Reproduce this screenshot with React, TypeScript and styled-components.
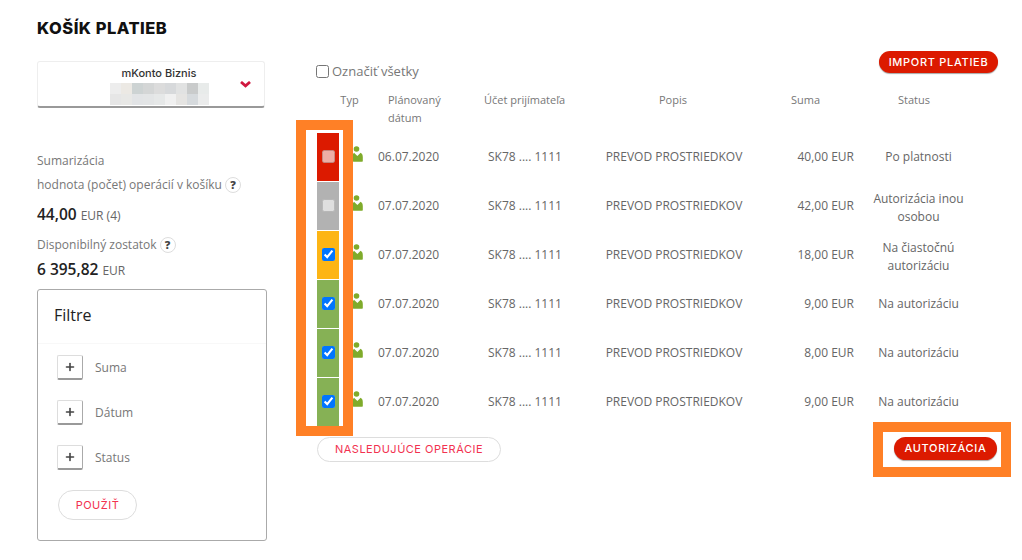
import { createGlobalStyle, styled } from "styled-components";
import { Plus } from "lucide-react";

const GlobalStyle = createGlobalStyle`
  html, body {
    margin: 0;
    background: #fff;
  }
  body {
    font-family: "Open Sans", "Liberation Sans", sans-serif;
    font-size: 12px;
    color: #666;
  }
`;

const BRAND_FONT = `"Inter", "Liberation Sans", sans-serif`;

const Page = styled.div`
  width: 1022px;
  height: 560px;
  overflow: hidden;
  display: flex;
  padding-left: 37px;
  box-sizing: border-box;
`;

const Sidebar = styled.aside`
  width: 230px;
  padding-top: 19px;
`;

const Title = styled.h1`
  margin: 0 0 24px;
  font: 800 16.5px/18px ${BRAND_FONT};
  letter-spacing: 0.5px;
  color: #111;
`;

const AccountBox = styled.div`
  position: relative;
  width: 228px;
  height: 47px;
  box-sizing: border-box;
  border: 1px solid #eee;
  border-bottom: 2px solid #999;
  border-radius: 3px;
  padding: 4px 0 0 16px;
  display: flex;
  flex-direction: column;
  align-items: center;
`;

const AccountName = styled.div`
  font: 500 11px/15px ${BRAND_FONT};
  color: #333;
`;

const Mosaic = styled.div`
  display: grid;
  grid-template-columns: repeat(9, 11px);
  grid-auto-rows: 11px;
  margin-top: 2px;
`;

const Tile = styled.span<{ $color: string }>`
  background: ${(p) => p.$color};
`;

const Chevron = styled.svg`
  position: absolute;
  right: 13px;
  top: 19px;
`;

const SummaryLabel = styled.div<{ $top: number }>`
  margin-top: ${(p) => p.$top}px;
  height: 18px;
  display: flex;
  align-items: center;
  gap: 3px;
  line-height: 18px;
  color: #777;
`;

const Amount = styled.div<{ $top: number }>`
  margin-top: ${(p) => p.$top}px;
  line-height: 20px;
  font-size: 12px;
  color: #666;
`;

const AmountValue = styled.strong`
  font-size: 15.5px;
  font-weight: 600;
  color: #222;
  margin-right: 4px;
`;

const Help = styled.span`
  width: 16px;
  height: 16px;
  box-sizing: border-box;
  border: 1px solid #ddd;
  border-radius: 50%;
  display: inline-flex;
  align-items: center;
  justify-content: center;
  font-size: 11px;
  font-weight: 800;
  color: #444;
`;

const FilterCard = styled.section`
  margin-top: 8px;
  width: 230px;
  height: 252px;
  box-sizing: border-box;
  border: 1px solid #aaa;
  border-radius: 3px;
`;

const FilterHead = styled.div`
  height: 54px;
  box-sizing: border-box;
  padding: 0 0 4px 16px;
  display: flex;
  align-items: center;
  font-size: 16px;
  color: #222;
  border-bottom: 1px solid #f8f8f8;
`;

const FilterList = styled.div`
  padding: 11px 0 0 19px;
  display: flex;
  flex-direction: column;
  gap: 20px;
`;

const FilterRow = styled.div`
  display: flex;
  align-items: center;
  gap: 12px;
  height: 25px;
  color: #777;
`;

const PlusButton = styled.button`
  width: 26px;
  height: 25px;
  padding: 0;
  box-sizing: border-box;
  background: #fff;
  border: 1px solid #ddd;
  border-right-color: #aaa;
  border-bottom: 2px solid #999;
  border-radius: 2px;
  display: flex;
  align-items: center;
  justify-content: center;
  color: #444;
`;

const OutlinePill = styled.button<{ $width: number; $height: number }>`
  width: ${(p) => p.$width}px;
  height: ${(p) => p.$height}px;
  padding: 0;
  background: #fff;
  border: 1px solid #ddd;
  border-radius: 15px;
  font: 400 11px/1 ${BRAND_FONT};
  letter-spacing: 0.5px;
  color: #f2324f;
`;

const ApplyButton = styled(OutlinePill)`
  display: block;
  margin: 20px 0 0 20px;
`;

const Main = styled.main`
  margin-left: 49px;
  width: 682px;
  padding-top: 51px;
`;

const Toolbar = styled.div`
  height: 40px;
  display: flex;
  justify-content: space-between;
  align-items: flex-start;
`;

const SelectAll = styled.label`
  margin-top: 11px;
  display: flex;
  align-items: center;
  gap: 3px;
  font-size: 13px;
  line-height: 18px;
  color: #777;

  input {
    margin: 0;
  }
`;

const RedButton = styled.button<{ $width: number; $height: number }>`
  width: ${(p) => p.$width}px;
  height: ${(p) => p.$height}px;
  padding: 0;
  background: #dc1a00;
  border: 0;
  border-radius: 12px;
  box-shadow: 0 1px 1px rgba(0, 0, 0, 0.35);
  font: 500 11px/1 ${BRAND_FONT};
  letter-spacing: 0.7px;
  color: #fff;
`;

const HeadRow = styled.div`
  display: grid;
  grid-template-columns: 24px 39px 92px 110px 186px 94px 117px;
  height: 36px;
  line-height: 18px;
  color: #777;
  font-size: 11px;
`;

const HeadCell = styled.div<{ $align?: string; $pad?: string }>`
  text-align: ${(p) => p.$align ?? "center"};
  padding: ${(p) => p.$pad ?? "0"};
`;

const Rows = styled.div`
  position: relative;
  margin-top: 6px;
  padding-left: 1px;
  display: flex;
  flex-direction: column;
  gap: 1px;
`;

const Row = styled.div`
  display: grid;
  grid-template-columns: 22px 39px 92px 110px 186px 94px 117px;
  height: 48px;
  align-items: center;
  color: #666;
`;

const Bar = styled.div<{ $color: string }>`
  height: 48px;
  box-sizing: border-box;
  padding-bottom: 1px;
  background: ${(p) => p.$color};
  display: flex;
  align-items: center;
  justify-content: center;

  input {
    margin: 0;
  }
`;

const UserIcon = styled.svg`
  margin: -6px 0 0 13px;
  display: block;
`;

const Cell = styled.div<{ $align?: string; $pad?: string }>`
  text-align: ${(p) => p.$align ?? "center"};
  padding: ${(p) => p.$pad ?? "0"};
  line-height: 18px;
  white-space: nowrap;
`;

const Footer = styled.div`
  margin-top: 11px;
  padding: 0 1px;
  display: flex;
  justify-content: space-between;
  align-items: flex-start;
`;

const ActionWrap = styled.div`
  position: relative;
`;

const Highlight = styled.div`
  position: absolute;
  box-sizing: border-box;
  border: 10px solid #ff8026;
  pointer-events: none;
`;

const BarHighlight = styled(Highlight)`
  left: -20px;
  top: -13px;
  width: 57px;
  height: 316px;
`;

const ActionHighlight = styled(Highlight)`
  left: -21px;
  top: -15px;
  right: -14px;
  bottom: -17px;
`;

const mosaic = [
  "#ededed", "#ece9e4", "#cdd3d3", "#d4d6d6", "#dcdcdc", "#d7d9db", "#e1e2e2", "#c9cbcb", "#e8ebea",
  "#e6e6e6", "#e8e8e6", "#e2e4e6", "#e3e5e6", "#e6e8e8", "#f0f0f0", "#e5e4e2", "#d6dadd", "#ebecec",
];

const payments = [
  { color: "#dc1a00", locked: true, date: "06.07.2020", sum: "40,00 EUR", status: ["Po platnosti"] },
  { color: "#b2b2b2", locked: true, date: "07.07.2020", sum: "42,00 EUR", status: ["Autorizácia inou", "osobou"] },
  { color: "#fdb515", locked: false, date: "07.07.2020", sum: "18,00 EUR", status: ["Na čiastočnú", "autorizáciu"] },
  { color: "#86b155", locked: false, date: "07.07.2020", sum: "9,00 EUR", status: ["Na autorizáciu"] },
  { color: "#86b155", locked: false, date: "07.07.2020", sum: "8,00 EUR", status: ["Na autorizáciu"] },
  { color: "#86b155", locked: false, date: "07.07.2020", sum: "9,00 EUR", status: ["Na autorizáciu"] },
];

const filters = ["Suma", "Dátum", "Status"];

const App = () => {
  return (
    <Page>
      <GlobalStyle />
      <Sidebar>
        <Title>KOŠÍK PLATIEB</Title>
        <AccountBox>
          <AccountName>mKonto Biznis</AccountName>
          <Mosaic>
            {mosaic.map((color, i) => (
              <Tile key={i} $color={color} />
            ))}
          </Mosaic>
          <Chevron width="11" height="7" viewBox="0 0 11 7">
            <path d="M1 1 L5.5 4.8 L10 1" fill="none" stroke="#d0173f" strokeWidth="2.8" />
          </Chevron>
        </AccountBox>

        <SummaryLabel $top={44}>Sumarizácia</SummaryLabel>
        <SummaryLabel $top={6}>
          hodnota (počet) operácií v košíku <Help>?</Help>
        </SummaryLabel>
        <Amount $top={10}>
          <AmountValue>44,00</AmountValue>EUR (4)
        </Amount>
        <SummaryLabel $top={10}>
          Disponibilný zostatok <Help>?</Help>
        </SummaryLabel>
        <Amount $top={5}>
          <AmountValue>6 395,82</AmountValue>EUR
        </Amount>

        <FilterCard>
          <FilterHead>Filtre</FilterHead>
          <FilterList>
            {filters.map((name) => (
              <FilterRow key={name}>
                <PlusButton>
                  <Plus size={12} strokeWidth={3.2} />
                </PlusButton>
                {name}
              </FilterRow>
            ))}
          </FilterList>
          <ApplyButton $width={79} $height={30}>
            POUŽIŤ
          </ApplyButton>
        </FilterCard>
      </Sidebar>

      <Main>
        <Toolbar>
          <SelectAll>
            <input type="checkbox" />
            Označiť všetky
          </SelectAll>
          <RedButton $width={119} $height={22}>
            IMPORT PLATIEB
          </RedButton>
        </Toolbar>

        <HeadRow>
          <HeadCell />
          <HeadCell $pad="0 20px 0 0">Typ</HeadCell>
          <HeadCell $align="left" $pad="0 0 0 9px">
            Plánovaný
            <br />
            dátum
          </HeadCell>
          <HeadCell $pad="0 3px 0 0">Účet prijímateľa</HeadCell>
          <HeadCell $pad="0 2px 0 0">Popis</HeadCell>
          <HeadCell $align="left" $pad="0 0 0 24px">
            Suma
          </HeadCell>
          <HeadCell $pad="0 11px 0 0">Status</HeadCell>
        </HeadRow>

        <Rows>
          {payments.map((p, i) => (
            <Row key={i}>
              <Bar $color={p.color}>
                <input type="checkbox" defaultChecked={!p.locked} disabled={p.locked} />
              </Bar>
              <UserIcon width="12" height="16" viewBox="0 0 12 16">
                <circle cx="4.5" cy="3" r="2.8" fill="#7fab2b" />
                <path
                  d="M2 6.8 L5.4 10 L8.6 6.8 C10 7.4 10.8 9 10.8 11 V15.4 C8 16 3 16 0.8 15.4 V11 C0.8 9 1 7.4 2 6.8 Z"
                  fill="#7fab2b"
                />
              </UserIcon>
              <Cell $align="left">{p.date}</Cell>
              <Cell>SK78 .... 1111</Cell>
              <Cell $pad="0 0 0 2px">PREVOD PROSTRIEDKOV</Cell>
              <Cell $align="right" $pad="0 6px 0 0">
                {p.sum}
              </Cell>
              <Cell $pad={p.status.length > 1 ? "4px 0 0" : "0"}>
                {p.status.map((line) => (
                  <div key={line}>{line}</div>
                ))}
              </Cell>
            </Row>
          ))}
          <BarHighlight />
        </Rows>

        <Footer>
          <OutlinePill $width={184} $height={25}>
            NASLEDUJÚCE OPERÁCIE
          </OutlinePill>
          <ActionWrap>
            <RedButton $width={103} $height={23}>
              AUTORIZÁCIA
            </RedButton>
            <ActionHighlight />
          </ActionWrap>
        </Footer>
      </Main>
    </Page>
  );
};

export default App;
